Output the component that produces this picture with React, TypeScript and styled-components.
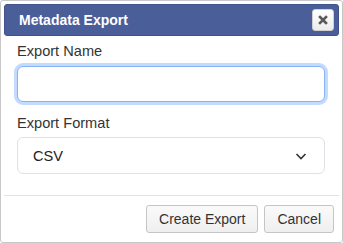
import React, { useState } from "react";
import styled, { createGlobalStyle } from "styled-components";

const GlobalStyle = createGlobalStyle`
  html, body {
    margin: 0;
    padding: 0;
    background: #fff;
  }
  body {
    font-family: "Liberation Sans", Arial, sans-serif;
    color: #333;
  }
`;

const App = () => {
  const [name, setName] = useState("");
  const [format, setFormat] = useState("CSV");

  return (
    <>
      <GlobalStyle />
      <Dialog>
        <TitleBar>
          <Title>Metadata Export</Title>
          <CloseButton aria-label="Close">
            <svg width="10" height="10" viewBox="0 0 10 10">
              <path
                d="M2 2 L8 8 M8 2 L2 8"
                stroke="#5a5a5a"
                strokeWidth="2.6"
                strokeLinecap="square"
              />
            </svg>
          </CloseButton>
        </TitleBar>

        <Body>
          <Field>
            <Label htmlFor="export-name">Export Name</Label>
            <TextInput
              id="export-name"
              value={name}
              onChange={(e) => setName(e.target.value)}
              $focused
            />
          </Field>
          <Field>
            <Label htmlFor="export-format">Export Format</Label>
            <SelectBox>
              <span>{format}</span>
              <svg width="14" height="14" viewBox="0 0 14 14">
                <path
                  d="M2.5 5 L7 9.5 L11.5 5"
                  fill="none"
                  stroke="#333"
                  strokeWidth="1.6"
                />
              </svg>
              <HiddenSelect
                id="export-format"
                value={format}
                onChange={(e) => setFormat(e.target.value)}
              >
                <option>CSV</option>
                <option>JSON</option>
                <option>XML</option>
              </HiddenSelect>
            </SelectBox>
          </Field>
        </Body>

        <Footer>
          <Button>Create Export</Button>
          <Button>Cancel</Button>
        </Footer>
      </Dialog>
    </>
  );
};

export default App;

const Dialog = styled.div`
  box-sizing: border-box;
  width: 343px;
  height: 243px;
  border: 1px solid #c8c8c8;
  border-radius: 3px;
  padding: 3px;
  display: flex;
  flex-direction: column;
  background: #fff;
`;

const TitleBar = styled.div`
  height: 32px;
  background: #4a5e99;
  border: 1px solid #3f5289;
  border-radius: 3px;
  box-sizing: border-box;
  display: flex;
  align-items: center;
  justify-content: space-between;
  padding: 0 4px 0 14px;
`;

const Title = styled.span`
  color: #fff;
  font-weight: bold;
  font-size: 14px;
`;

const CloseButton = styled.button`
  width: 22px;
  height: 22px;
  padding: 0;
  display: flex;
  align-items: center;
  justify-content: center;
  background: linear-gradient(#ffffff, #ececec);
  border: 1px solid #d0d0d0;
  border-radius: 3px;
`;

const Body = styled.div`
  padding: 7px 14px 0 13px;
  display: flex;
  flex-direction: column;
  gap: 13px;
  flex: 1;
`;

const Field = styled.div`
  display: flex;
  flex-direction: column;
  gap: 6px;
`;

const Label = styled.label`
  font-size: 14.6px;
  color: #333;
  line-height: 16px;
`;

const TextInput = styled.input<{ $focused?: boolean }>`
  box-sizing: border-box;
  height: 36px;
  width: 100%;
  border: 1px solid ${({ $focused }) => ($focused ? "#86b3f3" : "#dee2e6")};
  border-radius: 6px;
  box-shadow: ${({ $focused }) =>
    $focused ? "0 0 0 3px rgba(13, 110, 253, 0.25)" : "none"};
  outline: none;
  font: inherit;
  padding: 0 12px;
  margin: 1px 0 0;
`;

const SelectBox = styled.div`
  position: relative;
  box-sizing: border-box;
  height: 37px;
  border: 1px solid #dee2e6;
  border-radius: 6px;
  display: flex;
  align-items: center;
  justify-content: space-between;
  padding: 0 16px 0 15px;
  font-size: 14.6px;
  color: #222;
`;

const HiddenSelect = styled.select`
  position: absolute;
  inset: 0;
  opacity: 0;
  cursor: pointer;
`;

const Footer = styled.div`
  border-top: 1px solid #e2e2e2;
  display: flex;
  justify-content: flex-end;
  gap: 6px;
  padding: 9px 5px 6px;
`;

const Button = styled.button`
  height: 28px;
  padding: 0 12px;
  font-family: "Liberation Sans", Arial, sans-serif;
  font-size: 14px;
  color: #333;
  background: linear-gradient(#fafafa, #efefef);
  border: 1px solid #c5c5c5;
  border-radius: 3px;
`;
